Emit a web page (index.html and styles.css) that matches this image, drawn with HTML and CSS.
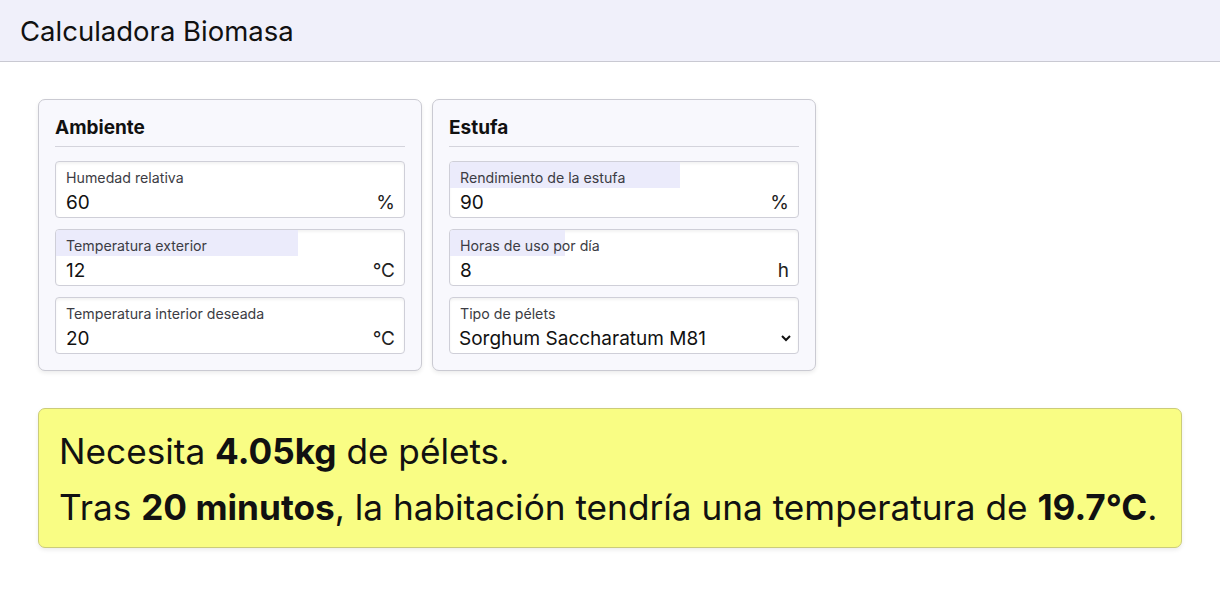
FILE: index.html
```html
<!DOCTYPE html>
<html lang="es">
<head>
  <meta charset="utf-8">
  <title>Calculadora Biomasa</title>
  <link rel="stylesheet" href="styles.css">
</head>
<body>

  <header class="topbar">
    <h1>Calculadora Biomasa</h1>
  </header>

  <main class="main">
    <div class="cards">
      <section class="card">
        <h2>Ambiente</h2>
        <label class="field">
          <span class="caption" style="--fill: 0%">Humedad relativa</span>
          <span class="value-row">
            <input type="text" value="60">
            <span class="unit">%</span>
          </span>
        </label>
        <label class="field">
          <span class="caption" style="--fill: 69.5%">Temperatura exterior</span>
          <span class="value-row">
            <input type="text" value="12">
            <span class="unit">°C</span>
          </span>
        </label>
        <label class="field">
          <span class="caption" style="--fill: 0%">Temperatura interior deseada</span>
          <span class="value-row">
            <input type="text" value="20">
            <span class="unit">°C</span>
          </span>
        </label>
      </section>

      <section class="card">
        <h2>Estufa</h2>
        <label class="field">
          <span class="caption" style="--fill: 66%">Rendimiento de la estufa</span>
          <span class="value-row">
            <input type="text" value="90">
            <span class="unit">%</span>
          </span>
        </label>
        <label class="field">
          <span class="caption" style="--fill: 33%">Horas de uso por día</span>
          <span class="value-row">
            <input type="text" value="8">
            <span class="unit">h</span>
          </span>
        </label>
        <label class="field">
          <span class="caption" style="--fill: 0%">Tipo de pélets</span>
          <span class="value-row">
            <select>
              <option>Sorghum Saccharatum M81</option>
            </select>
          </span>
        </label>
      </section>
    </div>

    <div class="result">
      <p>Necesita <b>4.05kg</b> de pélets.</p>
      <p>Tras <b>20 minutos</b>, la habitación tendría una temperatura de <b>19.7°C</b>.</p>
    </div>
  </main>

</body>
</html>
```

FILE: styles.css
```css
body {
  margin: 0;
  font-family: Inter, "Noto Sans", sans-serif;
  color: #111;
  background: #fff;
}

.topbar {
  background: #f0f0fa;
  border-bottom: 1px solid #c9c9d2;
  height: 61px;
  display: flex;
  align-items: center;
  padding: 0 20px;
}

.topbar h1 {
  margin: 0;
  font-size: 27.5px;
  font-weight: 400;
}

.main {
  padding: 37px 38px;
}

.cards {
  display: flex;
  gap: 10px;
}

.card {
  width: 350px;
  background: #f8f8fd;
  border: 1px solid #cacad2;
  border-radius: 7px;
  box-shadow: 0 2px 4px rgba(0,0,0,0.08);
  padding: 15px 16px 16px;
  display: flex;
  flex-direction: column;
  gap: 11px;
}

.card h2 {
  margin: 0 0 3px;
  font-size: 19px;
  font-weight: 700;
  line-height: 26px;
  padding-bottom: 5px;
  border-bottom: 1px solid #d4d4dc;
}

.field {
  display: block;
  background: #fff;
  border: 1px solid #cfcfd8;
  border-radius: 4px;
  box-shadow: inset 0 2px 3px rgba(0,0,0,0.05);
  overflow: hidden;
}

.caption {
  display: block;
  height: 24px;
  padding: 2px 10px 0;
  line-height: 28px;
  font-size: 14.2px;
  color: #3c3c44;
  background: linear-gradient(to right, #ebebfb var(--fill), transparent var(--fill));
}

.value-row {
  display: flex;
  align-items: center;
  height: 29px;
  padding: 0 9px 0 10px;
}

.value-row input,
.value-row select {
  flex: 1;
  min-width: 0;
  border: none;
  outline: none;
  background: transparent;
  padding: 0;
  font-family: inherit;
  font-size: 19px;
  color: #111;
}

.value-row select {
  margin-left: -5px;
  margin-right: -5px;
}

.unit {
  font-size: 19px;
  color: #222;
}

.result {
  margin-top: 37px;
  background: #f9fd84;
  border: 1px solid #cccc7a;
  border-radius: 7px;
  box-shadow: 0 2px 4px rgba(0,0,0,0.08);
  padding: 14px 10px 12px 20px;
}

.result p {
  margin: 0;
  font-size: 35.2px;
  line-height: 56px;
  white-space: nowrap;
}

.result b {
  font-weight: 700;
}
```
